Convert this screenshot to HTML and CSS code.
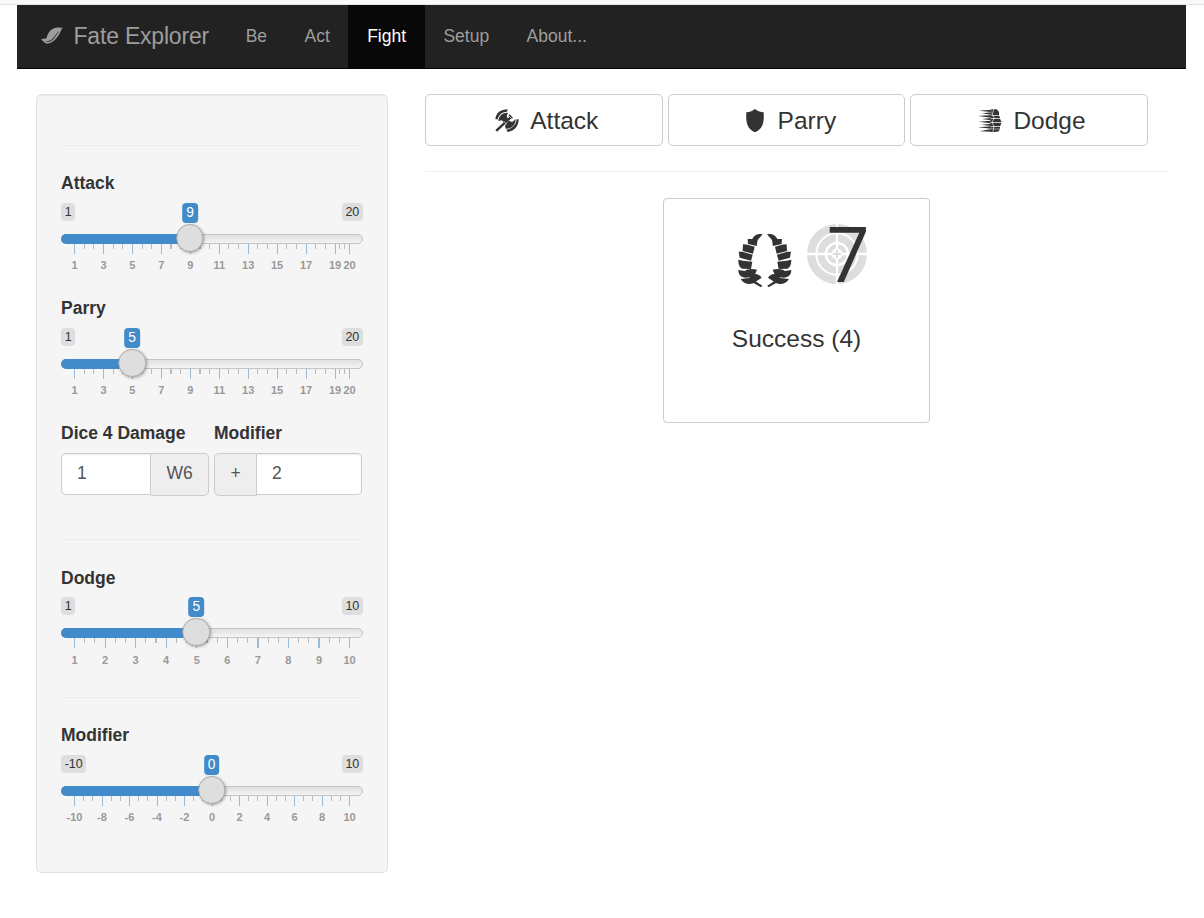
FILE: index.html
```html
<!DOCTYPE html>
<html lang="en">
<head>
<meta charset="utf-8">
<title>Fate Explorer</title>
<link rel="stylesheet" href="styles.css">
</head>
<body>
<div class="topstrip"></div>
<nav class="navbar">
  <a class="brand">
    <svg class="brand-icon" viewBox="0 0 66 50"><path d="M66 1C61 5 60 14 53 24C42 40 30 50 15 49L8 44L0 36L17 33C19 20 28 5 45 2C54 0 58 3 66 1Z" fill="#9d9d9d"/><path d="M13 42C24 47 35 40 41 31C46 23 51 20 55 11C50 17 45 21 41 27C36 36 27 42 13 42Z" fill="#222"/></svg>
    <span>Fate Explorer</span>
  </a>
  <a class="tab">Be</a><a class="tab">Act</a><a class="tab active">Fight</a><a class="tab">Setup</a><a class="tab">About...</a>
</nav>
<div class="layout">
  <aside class="well">
    <hr class="first">
    <section class="field"><label>Attack</label><div class="slider" data-min="1" data-max="20" data-value="9" data-step="2"></div></section>
    <section class="field"><label>Parry</label><div class="slider" data-min="1" data-max="20" data-value="5" data-step="2"></div></section>
    <section class="inputs">
      <div class="dice"><label>Dice 4 Damage</label><div class="group"><span class="control">1</span><span class="addon">W6</span></div></div>
      <div class="mod"><label>Modifier</label><div class="group"><span class="addon">+</span><span class="control">2</span></div></div>
    </section>
    <hr class="second">
    <section class="field dodge"><label>Dodge</label><div class="slider" data-min="1" data-max="10" data-value="5" data-step="1"></div></section>
    <hr class="third">
    <section class="field modifier"><label>Modifier</label><div class="slider" data-min="-10" data-max="10" data-value="0" data-step="2"></div></section>
  </aside>
  <main class="main">
    <div class="buttons">
      <a class="btn">
        <svg class="btn-icon" viewBox="0 0 72 70"><g fill="#333"><path d="M1 31C3 12 17 1 38 1L36 8C22 8 11 17 8 31Z"/><path d="M10 36C11 20 23 10 39 11L35 22L40 31L28 41L20 34Z"/><path d="M71 31C71 51 58 67 38 69L34 62C51 60 63 49 65 31Z"/><path d="M62 30C62 48 50 60 32 59L30 51L34 43L42 35L52 39Z"/><path d="M44 23L49 28L6 68L1 63Z"/><path d="M39 20L44 16L54 26L49 31Z"/></g><path d="M26 37L36 46M39 18L51 30" stroke="#fff" stroke-width="2"/></svg>
        <span>Attack</span></a>
      <a class="btn">
        <svg class="shield" viewBox="0 0 54 70"><path d="M27 0C18 8 10 9 1 10C-1 38 3 60 27 70C51 60 55 38 53 10C44 9 36 8 27 0Z" fill="#333"/></svg>
        <span>Parry</span></a>
      <a class="btn">
        <svg class="btn-icon" viewBox="0 0 72 70"><g fill="#333"><path d="M2 5L40 2V9ZM12 13L40 10V17ZM0 21L40 18V26ZM12 30L38 27V34ZM2 38L38 35V43ZM10 47L40 44V51ZM0 55L40 52V59ZM5 67L40 60V68Z"/><path d="M40 1H56L63 9V18H40ZM38 20H64L66 27H38ZM38 29H66L71 40H38ZM38 42H70L67 51H38ZM40 53H66V59H40ZM40 61H65L63 67L46 70H38Z"/></g><path d="M47 0L43 18L49 27L42 40L48 52L45 69" fill="none" stroke="#fff" stroke-width="2"/></svg>
        <span>Dodge</span></a>
    </div>
    <hr class="divider">
    <div class="card">
      <div class="result">
        <svg class="laurel" viewBox="50 68 166 164">
          <defs><g id="branch" fill="#333">
            <path d="M127 72C112 68 100 76 96 86L82 86L83 101L109 107L112 89Z"/>
            <path d="M82 103L68 102L67 122L98 130L103 109Z"/>
            <path d="M66 124L55 124L58 142L92 151L97 133Z"/>
            <path d="M54 148C54 162 58 172 66 175L92 176L96 154L68 151Z"/>
            <path d="M54 179C54 193 62 202 77 202L101 199L110 178C94 174 80 176 73 182Z"/>
            <path d="M61 206C69 219 84 225 99 219L124 202C113 186 96 188 87 203Z"/>
            <path d="M89 212L99 208L126 226L122 231Z"/>
          </g></defs>
          <use href="#branch"/><use href="#branch" transform="translate(267 0) scale(-1 1)"/>
        </svg>
        <div class="roll">
          <svg class="target" viewBox="-90 -90 180 180"><g fill="none" stroke="#ddd"><circle r="77.5" stroke-width="25"/><circle r="48" stroke-width="22"/><circle r="23" stroke-width="13"/></g><path d="M-90 0H-14M14 0H90M0-90V-14M0 14V90" stroke="#fff" stroke-width="7"/><path d="M-13 0H13M0-13V13" stroke="#ddd" stroke-width="6"/></svg>
          <span class="seven">7</span>
        </div>
      </div>
      <div class="verdict">Success (4)</div>
    </div>
  </main>
</div>
<script src="sliders.js"></script>
</body>
</html>
```
FILE: styles.css
```css
* { box-sizing: border-box; }
body { margin: 0; background: #fff; color: #333; font: 17.5px/25px "Liberation Sans", Arial, sans-serif; height: 918px; overflow: hidden; }
hr { border: 0; border-top: 1px solid #eee; margin: 0; height: 1px; }
.topstrip { height: 5px; background: #f9f9fb; border-bottom: 1px solid #e5e5e7; }
.navbar { margin-left: 17px; width: 1169px; height: 64px; background: #222; border-bottom: 1px solid #080808; display: flex; color: #9d9d9d; line-height: 62px; }
.brand { display: flex; align-items: center; width: 210px; padding: 0 0 2px 23.5px; font-size: 23px; line-height: 60px; letter-spacing: -.2px; }
.brand-icon { width: 22px; height: 17px; margin-right: 11px; }
.tab { padding: 0 18.7px; }
.tab.active { background: #080808; color: #fff; }
.layout { display: flex; align-items: flex-start; padding: 25px 0 0 36px; }
.well { width: 352px; height: 779px; padding: 50px 24px 0; background: #f5f5f5; border: 1px solid #e3e3e3; border-radius: 5px; box-shadow: inset 0 1px 1px rgba(0,0,0,.05); }
.well hr { border-color: #ececec; }
label { display: block; font-weight: bold; height: 25px; line-height: 27px; }
.field { height: 125px; }
.first { margin-bottom: 24px; }
.slider { position: relative; width: 302px; padding-top: 8px; }
.limits { display: flex; justify-content: space-between; height: 18px; }
.limits span { font-size: 12.5px; line-height: 18px; padding: 0 3.7px; background: #dedede; border-radius: 4px; height: 18px; }
.value { position: absolute; top: 8px; transform: translateX(-50%); background: #428bca; color: #fff; font-size: 13.75px; line-height: 20px; height: 20px; padding: 0 4px; border-radius: 4px; }
.track { margin-top: 13px; height: 10px; border: 1px solid #c4c4c4; border-radius: 10px; background: linear-gradient(#e0e0e0, #f4f4f4); }
.bar { position: absolute; left: 0; top: 39px; height: 10px; background: #428bca; border-radius: 8px 0 0 8px; }
.handle { position: absolute; top: 29px; width: 27.5px; height: 27.5px; transform: translateX(-50%); border: 1px solid #ababab; border-radius: 50%; background: #dedede; box-shadow: 1px 1px 3px rgba(0,0,0,.3); }
.scale { display: block; overflow: visible; }
.scale text { font-weight: bold; font-size: 11px; fill: #999; text-anchor: middle; }
.inputs { display: flex; gap: 5px; height: 119px; }
.dice { width: 148px; }
.mod { width: 148px; }
.group { display: flex; margin-top: 8px; color: #555; }
.control { flex: 1; height: 42px; padding-left: 15px; line-height: 38px; background: #fff; border: 1px solid #ccc; box-shadow: inset 0 1px 1px rgba(0,0,0,.075); }
.addon { height: 43px; line-height: 38px; text-align: center; background: #eee; border: 1px solid #ccc; }
.dice .control { border-radius: 5px 0 0 5px; }
.dice .addon { width: 58px; border-left: 0; border-radius: 0 5px 5px 0; }
.mod .addon { width: 43px; border-radius: 5px 0 0 5px; }
.mod .control { border-left: 0; border-radius: 0 5px 5px 0; }
.second { margin-bottom: 25px; }
.dodge { height: 132px; }
.dodge .slider { padding-top: 7px; }
.dodge .value { top: 7px; }
.dodge .bar { top: 38px; }
.dodge .handle { top: 28px; }
.dodge .scale text { transform: translateY(1px); }
.third { margin-bottom: 24px; }
.main { margin-left: 37px; width: 743px; }
.buttons { display: flex; gap: 5px; }
.btn { width: 237.6px; height: 52px; padding: 1px 0 0 6px; border: 1px solid #ccc; border-radius: 5px; display: flex; align-items: center; justify-content: center; font-size: 24.5px; line-height: 50px; gap: 11px; }
.btn-icon { width: 24px; height: 23.3px; }
.shield { width: 18px; height: 23.3px; margin: 0 3px; }
.divider { margin-top: 25px; }
.card { margin: 26px 0 0 238px; width: 267px; height: 225px; border: 1px solid #ccc; border-radius: 4px; }
.result { display: flex; height: 115px; padding: 24px 0 0 73px; }
.laurel { width: 55.3px; height: 54.7px; margin-top: 10px; }
.roll { position: relative; margin-left: 15px; width: 60px; }
.target { display: block; width: 60px; height: 60px; margin-top: 1px; }
.seven { position: absolute; left: 19px; top: -8px; font: 500 76px/76px "Open Sans", sans-serif; }
.verdict { text-align: center; font-size: 24.5px; line-height: 50px; }
```
FILE: sliders.js
```js
document.querySelectorAll('.slider').forEach(function (el) {
  var min = +el.dataset.min, max = +el.dataset.max;
  var value = +el.dataset.value, step = +el.dataset.step;
  function pos(v) { return 13.5 + (v - min) / (max - min) * 275; }
  var stops = [];
  for (var v = min; v < max; v += step) stops.push(v);
  stops.push(max);
  var marks = '';
  stops.forEach(function (s, i) {
    var x = pos(s);
    marks += '<rect x="' + (x - .5) + '" y="0" width="1.2" height="10" fill="#99bbd8" shape-rendering="crispEdges"/>';
    marks += '<text x="' + x + '" y="25">' + s + '</text>';
    if (i < stops.length - 1) {
      var gap = pos(stops[i + 1]) - x;
      [1, 2].forEach(function (k) {
        marks += '<rect x="' + (x + gap * k / 3 - .5) + '" y="0" width="1.1" height="5" fill="#bbb" shape-rendering="crispEdges"/>';
      });
    }
  });
  var at = pos(value) - .3;
  el.innerHTML = '<div class="limits"><span>' + min + '</span><span>' + max + '</span></div>' +
    '<div class="track"></div><div class="bar" style="width:' + at + 'px"></div>' +
    '<svg class="scale" width="302" height="34">' + marks + '</svg>' +
    '<div class="handle" style="left:' + at + 'px"></div>' +
    '<span class="value" style="left:' + at + 'px">' + value + '</span>';
});
```
